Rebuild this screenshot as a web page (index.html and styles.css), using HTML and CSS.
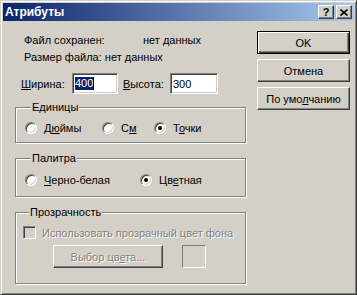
FILE: index.html
```html
<!DOCTYPE html>
<html lang="ru">
<head>
  <meta charset="UTF-8">
  <title>Атрибуты</title>
  <link rel="stylesheet" href="styles.css">
</head>
<body>

  <div class="window">

    <!-- Title bar -->
    <div class="titlebar">
      <span class="title">Атрибуты</span>
      <div class="title-buttons">
        <span class="tbtn help">?</span>
        <span class="tbtn close">
          <svg width="8" height="7" viewBox="0 0 8 7">
            <path d="M0.5 0.5 L7.5 6.5 M7.5 0.5 L0.5 6.5" stroke="#000" stroke-width="1.6" fill="none"/>
          </svg>
        </span>
      </div>
    </div>

    <div class="client">

      <!-- Left side: info, size, groups -->
      <div class="main">
        <div class="info">
          <div class="info-row"><span class="info-label">Файл сохранен:</span><span>нет данных</span></div>
          <div class="info-row">Размер файла: нет данных</div>
        </div>

        <div class="size-row">
          <label class="size-label"><u>Ш</u>ирина:</label>
          <div class="edit"><span class="sel">400</span><span class="caret"></span></div>
          <label class="size-label second"><u>В</u>ысота:</label>
          <div class="edit wide">300</div>
        </div>

        <fieldset class="group units">
          <legend>Единицы</legend>
          <div class="options">
            <div class="option"><span class="radio"></span><span>Д<u>ю</u>ймы</span></div>
            <div class="option"><span class="radio"></span><span>С<u>м</u></span></div>
            <div class="option"><span class="radio checked"></span><span>Т<u>о</u>чки</span></div>
          </div>
        </fieldset>

        <fieldset class="group palette">
          <legend>Палитра</legend>
          <div class="options">
            <div class="option"><span class="radio"></span><span><u>Ч</u>ерно-белая</span></div>
            <div class="option"><span class="radio checked"></span><span>Цв<u>е</u>тная</span></div>
          </div>
        </fieldset>

        <fieldset class="group transparency">
          <legend>Прозрачность</legend>
          <div class="check-row">
            <span class="checkbox"></span>
            <span class="disabled">Использовать прозрачный цвет фона</span>
          </div>
          <div class="color-row">
            <button class="btn pick"><span class="disabled">Выбор цв<u>е</u>та...</span></button>
            <div class="swatch"></div>
          </div>
        </fieldset>
      </div>

      <!-- Right side: dialog buttons -->
      <div class="actions">
        <button class="btn default">OK</button>
        <button class="btn">Отмена</button>
        <button class="btn"><span>По умо<u>л</u>чанию</span></button>
      </div>

    </div>
  </div>

</body>
</html>
```

FILE: styles.css
```css
* {
  margin: 0;
  padding: 0;
  box-sizing: border-box;
}
body {
  font-family: "Liberation Sans", Arial, sans-serif;
  font-size: 11px;
  color: #000;
  background-color: #d4d0c8;
}
u {
  text-decoration: underline;
  text-underline-offset: 1px;
}

/* Window frame */
.window {
  width: 357px;
  height: 295px;
  background-color: #d4d0c8;
  border: 1px solid;
  border-color: #d4d0c8 #404040 #404040 #d4d0c8;
  box-shadow: inset 1px 1px #fff, inset -1px -1px #808080;
  padding: 2px;
  display: flex;
  flex-direction: column;
}
.titlebar {
  height: 18px;
  background: linear-gradient(to right, #0a246a, #a6caf0);
  display: flex;
  align-items: center;
  justify-content: space-between;
  padding: 0 2px 0 2px;
}
.title {
  color: white;
  font-weight: bold;
  font-size: 12px;
}
.title-buttons {
  display: flex;
  gap: 2px;
}
.tbtn {
  width: 16px;
  height: 14px;
  background-color: #d4d0c8;
  border: 1px solid;
  border-color: #fff #404040 #404040 #fff;
  box-shadow: inset -1px -1px #808080;
  display: flex;
  align-items: center;
  justify-content: center;
  font-weight: bold;
  font-size: 11px;
  line-height: 1;
}

/* Dialog body */
.client {
  flex: 1;
  display: flex;
}
.main {
  width: 243px;
  padding: 11px 0 0 12px;
}
.info {
  margin-left: 9px;
  line-height: 17px;
}
.info-label {
  display: inline-block;
  width: 119px;
}
.size-row {
  display: flex;
  align-items: center;
  margin: 7px 0 0 6px;
}
.size-label {
  width: 51px;
}
.size-label.second {
  margin-left: 5px;
  width: 47px;
}
.edit {
  width: 46px;
  height: 21px;
  background-color: white;
  border: 1px solid;
  border-color: #808080 #fff #fff #808080;
  box-shadow: inset 1px 1px #404040, inset -1px -1px #d4d0c8;
  padding: 0 2px;
  display: flex;
  align-items: center;
}
.edit.wide {
  width: 48px;
}
.sel {
  background-color: #0a246a;
  color: white;
  line-height: 13px;
}
.caret {
  width: 1px;
  height: 13px;
  background-color: #000;
}

/* Group boxes */
.group {
  width: 231px;
  border: 1px solid #808080;
  box-shadow: inset 1px 1px #fff, 1px 1px #fff;
}
.group legend {
  margin-left: 6px;
  padding: 0 1px;
  line-height: 13px;
  background-color: #d4d0c8;
}
.units {
  margin-top: 7px;
  padding: 6px 0 6px 9px;
}
.palette {
  margin-top: 9px;
  padding: 7px 0 8px 9px;
}
.transparency {
  margin-top: 9px;
  padding: 6px 0 15px 7px;
}
.options {
  display: grid;
  height: 16px;
}
.units .options {
  grid-template-columns: 77px 52px auto;
}
.palette .options {
  grid-template-columns: 115px auto;
}
.option {
  display: flex;
  align-items: center;
  gap: 7px;
}
.radio {
  width: 12px;
  height: 12px;
  border-radius: 50%;
  background-color: white;
  border: 1px solid;
  border-color: #808080 #fff #fff #808080;
  box-shadow: inset 1px 1px #404040, inset -1px -1px #d4d0c8;
  display: flex;
  align-items: center;
  justify-content: center;
}
.radio.checked::after {
  content: "";
  width: 4px;
  height: 4px;
  border-radius: 50%;
  background-color: #000;
}
.check-row {
  display: flex;
  align-items: center;
  gap: 6px;
  height: 15px;
}
.checkbox {
  width: 13px;
  height: 13px;
  background-color: #d4d0c8;
  border: 1px solid;
  border-color: #808080 #fff #fff #808080;
  box-shadow: inset 1px 1px #404040, inset -1px -1px #d4d0c8;
}
.disabled {
  color: #808080;
  text-shadow: 1px 1px #fff;
}
.color-row {
  display: flex;
  gap: 19px;
  margin: 5px 0 0 30px;
}
.swatch {
  width: 24px;
  height: 23px;
  border: 1px solid;
  border-color: #808080 #fff #fff #808080;
}

/* Buttons */
.btn {
  width: 93px;
  height: 23px;
  font: inherit;
  color: #000;
  background-color: #d4d0c8;
  border: 1px solid;
  border-color: #fff #404040 #404040 #fff;
  box-shadow: inset -1px -1px #808080;
  display: flex;
  align-items: center;
  justify-content: center;
}
.btn.pick {
  width: 110px;
}
.btn.default {
  border-color: #000;
  box-shadow: inset 1px 1px #fff, inset -1px -1px #404040, inset -2px -2px #808080;
}
.actions {
  display: flex;
  flex-direction: column;
  gap: 5px;
  padding: 10px 0 0 11px;
}
```
